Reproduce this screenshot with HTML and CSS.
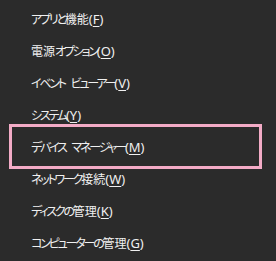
FILE: index.html
```
<!DOCTYPE html>
<html lang="ja">
<head>
    <meta charset="utf-8" />
    <title>メニュー</title>
    <link rel="stylesheet" href="styles.css">
</head>
<body>
    <div class="menu">
        <div class="item">アプリと<span class="kj">機能</span><span class="key">(<u>F</u>)</span></div>
        <div class="item"><span class="kj">電源</span>オプション<span class="key">(<u>O</u>)</span></div>
        <div class="item">イベント<span class="sp"> </span>ビューアー<span class="key">(<u>V</u>)</span></div>
        <div class="item">システム<span class="key">(<u>Y</u>)</span></div>
        <div class="item">デバイス<span class="sp"> </span>マネージャー<span class="key">(<u>M</u>)</span></div>
        <div class="item">ネットワーク<span class="kj">接続</span><span class="key">(<u>W</u>)</span></div>
        <div class="item">ディスクの<span class="kj">管理</span><span class="key">(<u>K</u>)</span></div>
        <div class="item">コンピューターの<span class="kj">管理</span><span class="key">(<u>G</u>)</span></div>
        <div class="mark"></div>
    </div>
</body>
</html>
```
FILE: styles.css
```
html,body,div{margin:0;padding:0;}
*{box-sizing:border-box;}
body{background-color:#2b2b2b;color:#f0f0f0;font-family:"Noto Sans CJK JP","Noto Sans",sans-serif;font-size:12px;}
.menu{position:relative;width:276px;height:261px;padding-top:3px;}
.item{height:32px;line-height:32px;padding-left:31px;white-space:nowrap;font-feature-settings:"palt";letter-spacing:-2.2px;}
.kj{letter-spacing:0;}
.sp{letter-spacing:3px;}
.key{font-family:"Noto Sans","Noto Sans CJK JP",sans-serif;font-size:13px;letter-spacing:0;}
.key u{text-underline-offset:2px;}
.mark{position:absolute;left:9px;top:124px;width:253px;height:45px;border:3px solid #f3abc6;}
```
